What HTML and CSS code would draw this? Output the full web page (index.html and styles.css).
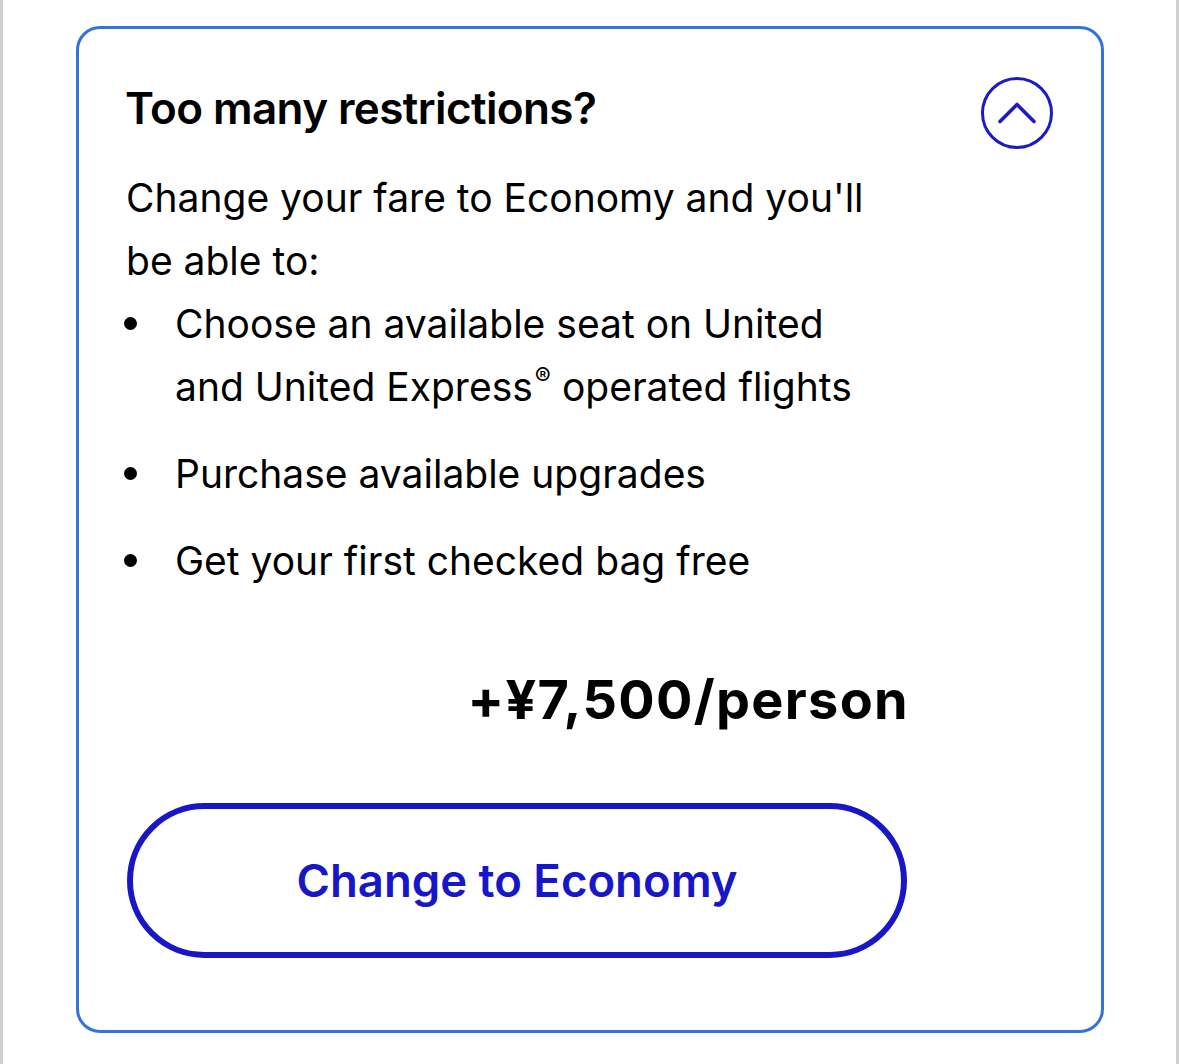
FILE: index.html
```html
<!DOCTYPE html>
<html lang="en">
<head>
<meta charset="utf-8">
<title>Too many restrictions?</title>
<link rel="stylesheet" href="styles.css">
</head>
<body>
<div class="page">
  <section class="card">
    <div class="card-head">
      <h2 class="card-title">Too many restrictions?</h2>
      <button class="collapse-btn" aria-label="Collapse">
        <svg viewBox="0 0 72 72" width="72" height="72" aria-hidden="true">
          <circle cx="36" cy="36" r="34.5" fill="none" stroke="currentColor" stroke-width="3"/>
          <path d="M19 44.5 L36 27.5 L53 44.5" fill="none" stroke="currentColor" stroke-width="3.6" stroke-linecap="round" stroke-linejoin="round"/>
        </svg>
      </button>
    </div>
    <div class="card-body">
      <p class="intro">Change your fare to Economy and you'll be able to:</p>
      <ul class="perks">
        <li><span>Choose an available seat on United</span> <span>and United Express<span class="reg">®</span> operated flights</span></li>
        <li>Purchase available upgrades</li>
        <li>Get your first checked bag free</li>
      </ul>
      <p class="price">+¥7,500/person</p>
      <button class="change-btn">Change to Economy</button>
    </div>
  </section>
</div>
</body>
</html>
```

FILE: styles.css
```css
* { box-sizing: border-box; }

html, body {
  margin: 0;
  padding: 0;
  background: #ffffff;
}

body {
  font-family: Inter, "Noto Sans", "Liberation Sans", sans-serif;
  color: #000;
}

.page {
  min-height: 100vh;
  border-left: 3px solid #cfcfcf;
  border-right: 3px solid #cfcfcf;
  padding: 26px 72px 30px 73px;
}

.card {
  border: 3px solid #3273dc;
  border-radius: 24px;
  padding: 48px 48px 72px 48px;
}

.card-head {
  display: flex;
  justify-content: space-between;
  align-items: flex-start;
}

.card-title {
  margin: 0 0 0 -2px;
  padding-top: 3px;
  font-size: 44px;
  font-weight: 600;
  line-height: 56px;
  letter-spacing: -0.6px;
}

.collapse-btn {
  width: 72px;
  height: 72px;
  padding: 0;
  border: 0;
  background: none;
  color: #1a1ac6;
  display: block;
}

.collapse-btn svg { display: block; }

.card-body {
  width: 780px;
  margin-top: 17px;
}

.intro {
  margin: 0 0 0 -1px;
  font-size: 39px;
  line-height: 63px;
  font-weight: 400;
}

.perks {
  list-style: none;
  margin: 0;
  padding: 0;
  display: flex;
  flex-direction: column;
  gap: 24px;
}

.perks li {
  position: relative;
  padding-left: 48px;
  padding-right: 20px;
  font-size: 39px;
  line-height: 63px;
}

.perks li::before {
  content: "";
  position: absolute;
  left: -3px;
  top: 25px;
  width: 13px;
  height: 13px;
  border-radius: 50%;
  background: #000;
}

.perks .reg {
  display: inline-block;
  font-size: 24px;
  line-height: 24px;
  vertical-align: 16px;
  margin-left: 2px;
}

.price {
  margin: 72px -2px 0 0;
  text-align: right;
  font-size: 54px;
  font-weight: 700;
  line-height: 72px;
  letter-spacing: 1.3px;
}

.change-btn {
  display: flex;
  align-items: center;
  justify-content: center;
  width: 780px;
  height: 155px;
  margin-top: 67px;
  border: 6px solid #1717c8;
  border-radius: 78px;
  background: #fff;
  color: #1717c8;
  font-family: Inter, "Noto Sans", "Liberation Sans", sans-serif;
  font-size: 45.5px;
  font-weight: 600;
  padding: 0;
}
```
